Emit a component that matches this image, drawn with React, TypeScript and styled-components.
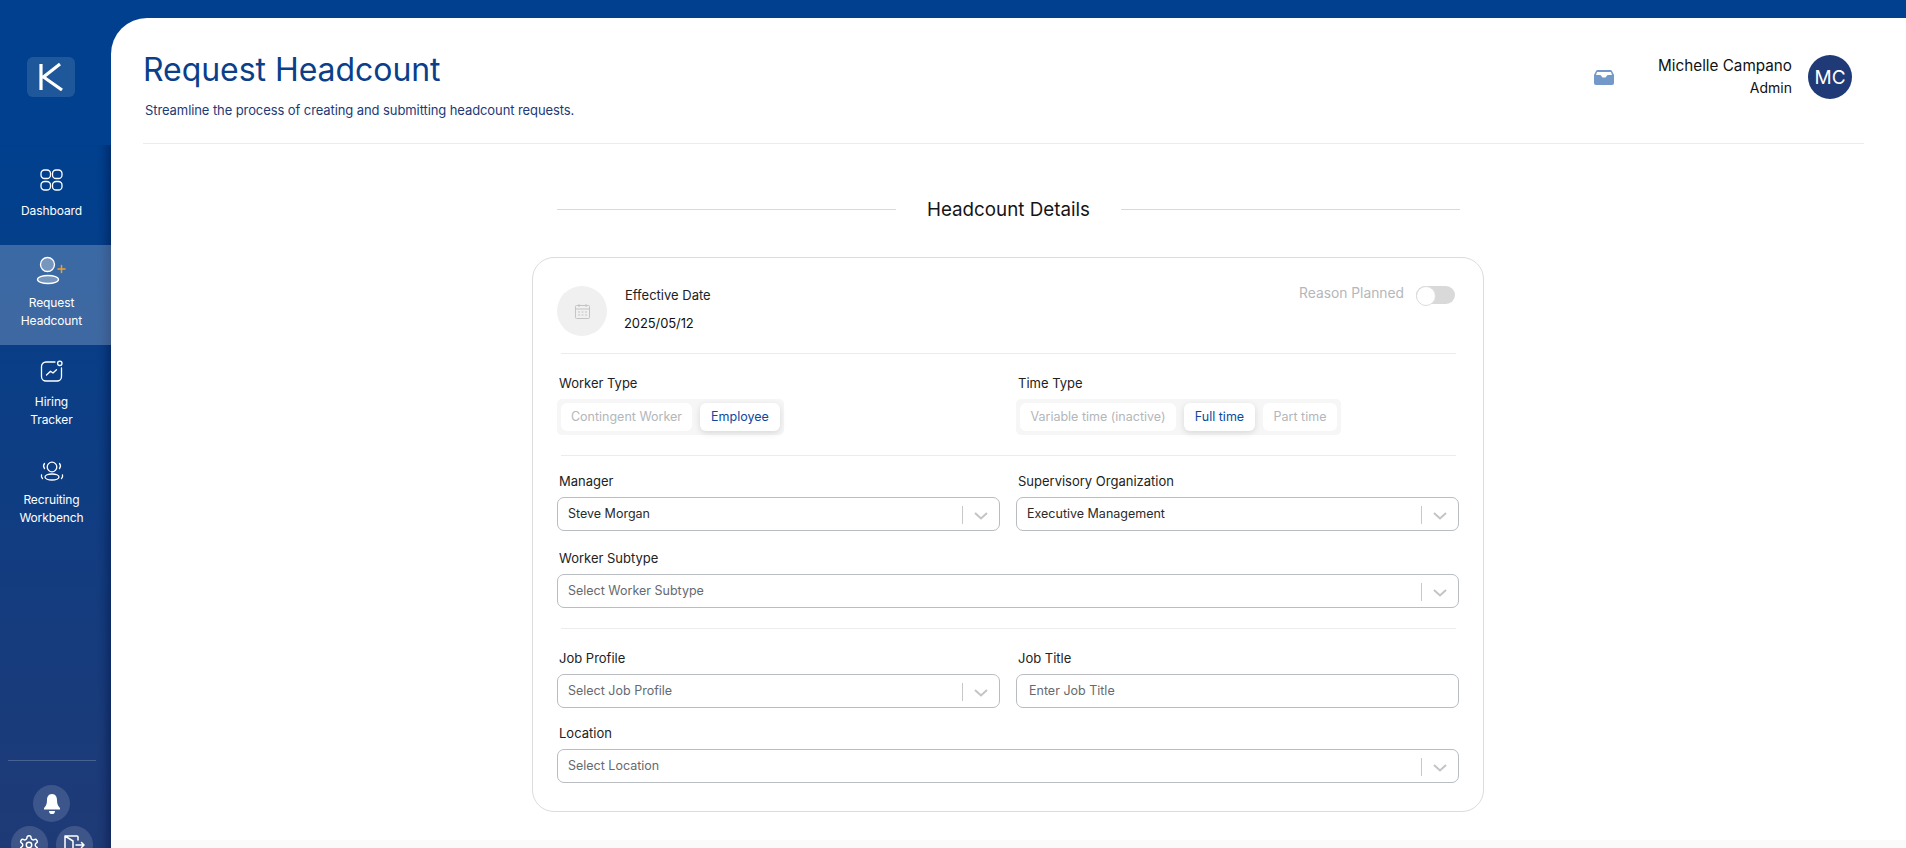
import React from "react";
import styled, { createGlobalStyle } from "styled-components";

const Global = createGlobalStyle`
  html, body { margin: 0; padding: 0; height: 100%; overflow: hidden; background: #fff; }
  body { font-family: "Inter", "Liberation Sans", sans-serif; -webkit-font-smoothing: antialiased; }
  * { box-sizing: border-box; }
`;

const Shell = styled.div`
  display: flex;
  width: 1906px;
  height: 848px;
  overflow: hidden;
  background: #00408e;
`;
const Sidebar = styled.aside`
  width: 111px;
  flex: none;
  display: flex;
  flex-direction: column;
  color: #fff;
  height: 848px;
`;
const LogoArea = styled.div`
  height: 145px;
  flex: none;
  padding: 57px 0 0 27px;
`;
const Logo = styled.div`
  width: 48px;
  height: 40px;
  border-radius: 6px;
  background: rgba(255, 255, 255, 0.12);
  display: flex;
  align-items: center;
  justify-content: center;
`;
const NavPanel = styled.nav`
  flex: 1;
  display: flex;
  flex-direction: column;
  background: linear-gradient(180deg, #00408e 0%, #1f3a76 100%);
  box-shadow: inset -12px 0 10px -8px rgba(0, 16, 60, 0.45);
`;
const NavItem = styled.a<{ $active?: boolean; $h: number; $pad: number }>`
  height: ${(p) => p.$h}px;
  padding: ${(p) => p.$pad}px 8px 0 0;
  flex: none;
  display: flex;
  flex-direction: column;
  align-items: center;
  font-size: 12px;
  line-height: 18px;
  letter-spacing: -0.1px;
  text-align: center;
  color: #fff;
  background: ${(p) => (p.$active ? "rgba(255,255,255,0.22)" : "transparent")};
`;
const NavIcon = styled.svg<{ $gap: number }>`
  width: 28px;
  height: 28px;
  margin-bottom: ${(p) => p.$gap}px;
  flex: none;
  overflow: visible;
`;
const SideBottom = styled.div`
  margin-top: auto;
  display: flex;
  flex-direction: column;
  align-items: center;
  height: 88px;
  padding-right: 8px;
`;
const SideRule = styled.div`
  width: 88px;
  height: 1px;
  background: rgba(255, 255, 255, 0.2);
  margin-bottom: 24px;
  flex: none;
`;
const RoundBtn = styled.div`
  width: 37px;
  height: 37px;
  border-radius: 50%;
  background: rgba(255, 255, 255, 0.14);
  display: flex;
  align-items: center;
  justify-content: center;
  flex: none;
`;
const RoundRow = styled.div`
  display: flex;
  gap: 8px;
  margin-top: 4px;
  flex: none;
`;

const Main = styled.main`
  flex: 1;
  margin-top: 18px;
  height: 830px;
  background: linear-gradient(180deg, #fff 0%, #fff 99%, #fafafa 99%, #fafafa 100%);
  border-top-left-radius: 36px;
  display: flex;
  flex-direction: column;
  overflow: hidden;
`;
const Header = styled.header`
  height: 126px;
  margin: 0 42px 0 32px;
  flex: none;
  border-bottom: 1px solid #ececec;
  display: flex;
  justify-content: space-between;
  padding-right: 12px;
`;
const TitleBlock = styled.div`
  display: flex;
  flex-direction: column;
`;
const Title = styled.h1`
  margin: 32px 0 0;
  font-size: 32px;
  line-height: 40px;
  font-weight: 400;
  color: #0b3f8a;
  letter-spacing: -0.05px;
`;
const Subtitle = styled.p`
  margin: 12px 0 0 2px;
  font-size: 13px;
  line-height: 16px;
  letter-spacing: -0.09px;
  color: #1c3a78;
`;
const UserArea = styled.div`
  display: flex;
  align-items: flex-start;
  padding-top: 37px;
`;
const Inbox = styled.svg`
  width: 20px;
  height: 15px;
  margin: 15px 0 0;
`;
const UserText = styled.div`
  width: 135px;
  margin: 0 16px 0 43px;
  display: flex;
  flex-direction: column;
  align-items: flex-end;
  color: #111;
`;
const UserName = styled.div`
  font-size: 15.25px;
  line-height: 22px;
  white-space: nowrap;
`;
const UserRole = styled.div`
  font-size: 14px;
  line-height: 21px;
`;
const Avatar = styled.div`
  width: 44px;
  height: 44px;
  border-radius: 50%;
  background: #1f3a76;
  color: #fff;
  font-size: 19px;
  display: flex;
  align-items: center;
  justify-content: center;
`;

const Content = styled.div`
  width: 952px;
  margin-left: 421px;
  flex: none;
`;
const SectionHead = styled.div`
  display: flex;
  align-items: center;
  justify-content: center;
  height: 46px;
  margin: 42px 24px 0 25px;
  gap: 31px;
  font-size: 18.8px;
  color: #151515;
  white-space: nowrap;
  &::before, &::after {
    content: "";
    flex: 1;
    height: 1px;
    background: #d9d9d9;
  }
`;
const Card = styled.section`
  margin-top: 25px;
  height: 555px;
  border: 1px solid #dcdcdc;
  border-radius: 22px;
  padding: 28px 23px 0 24px;
  display: flex;
  flex-direction: column;
`;
const DateRow = styled.div`
  display: flex;
  height: 50px;
  flex: none;
`;
const DateCircle = styled.div`
  width: 50px;
  height: 50px;
  border-radius: 50%;
  background: #f0f0f0;
  display: flex;
  align-items: center;
  justify-content: center;
  margin-right: 18px;
  flex: none;
`;
const DateText = styled.div`
  display: flex;
  flex-direction: column;
`;
const DateLabel = styled.div`
  font-size: 13px;
  line-height: 18px;
  color: #222;
`;
const DateValue = styled.div`
  font-size: 13px;
  line-height: 18px;
  letter-spacing: -0.1px;
  color: #111;
  margin: 10px 0 0 -1px;
`;
const ToggleWrap = styled.div`
  margin-left: auto;
  display: flex;
  gap: 12px;
  font-size: 13.8px;
  line-height: 16px;
  color: #b5b7ba;
  margin-right: 5px;
`;
const ToggleText = styled.span`
  margin-top: -1px;
`;
const Toggle = styled.div`
  width: 39px;
  height: 18px;
  border-radius: 9px;
  background: #d9d9d9;
  position: relative;
  &::after {
    content: "";
    position: absolute;
    left: 0;
    top: 0;
    width: 18px;
    height: 18px;
    border-radius: 50%;
    background: #fff;
    border: 1px solid #dcdcdc;
  }
`;
const Rule = styled.div<{ $top: number; $bottom: number }>`
  height: 1px;
  background: #ececec;
  margin: ${(p) => p.$top}px 4px ${(p) => p.$bottom}px;
  flex: none;
`;
const Row = styled.div<{ $mb?: number }>`
  display: grid;
  grid-template-columns: 443px 443px;
  column-gap: 16px;
  margin-bottom: ${(p) => p.$mb ?? 0}px;
  flex: none;
`;
const Field = styled.div`
  display: flex;
  flex-direction: column;
  align-items: flex-start;
`;
const Label = styled.label`
  font-size: 13px;
  line-height: 18px;
  color: #222;
  margin: 0 0 7px 2px;
`;
const Segment = styled.div`
  display: inline-flex;
  gap: 8px;
  padding: 4px;
  border-radius: 5px;
  background: #f6f6f6;
  height: 36px;
`;
const SegBtn = styled.div<{ $on?: boolean; $w: number }>`
  width: ${(p) => p.$w}px;
  height: 28px;
  padding-bottom: 2px;
  border-radius: 6px;
  background: #fff;
  font-size: 12.5px;
  white-space: nowrap;
  display: flex;
  align-items: center;
  justify-content: center;
  color: ${(p) => (p.$on ? "#0b4a9e" : "#b3b6ba")};
  box-shadow: ${(p) => (p.$on ? "0 2px 6px rgba(0,0,0,0.12)" : "none")};
`;
const Control = styled.div<{ $full?: boolean }>`
  width: ${(p) => (p.$full ? "902px" : "100%")};
  height: 34px;
  border: 1px solid #b9bcc0;
  border-radius: 7px;
  background: #fff;
  display: flex;
  align-items: center;
  font-size: 12.5px;
  color: #2a2a2a;
`;
const ControlText = styled.span<{ $placeholder?: boolean; $pad?: number }>`
  flex: 1;
  padding-left: ${(p) => p.$pad ?? 10}px;
  margin-top: -1px;
  color: ${(p) => (p.$placeholder ? "#666a70" : "#2a2a2a")};
`;
const ControlSep = styled.span`
  width: 1px;
  height: 18px;
  background: #c8c8c8;
  margin-top: 1px;
  flex: none;
`;
const Chevron = styled.svg`
  width: 36px;
  height: 18px;
  flex: none;
  margin-top: 3px;
`;

const Select = ({ text, placeholder, full }: { text: string; placeholder?: boolean; full?: boolean }) => (
  <Control $full={full}>
    <ControlText $placeholder={placeholder}>{text}</ControlText>
    <ControlSep />
    <Chevron viewBox="0 0 36 18" fill="none">
      <path d="M12 6 L18 11.5 L24 6" stroke="#c4c4c4" strokeWidth="2" />
    </Chevron>
  </Control>
);

const ic = { fill: "none", stroke: "#fff", strokeWidth: 1.3, strokeLinecap: "round" as const, strokeLinejoin: "round" as const };

export default function App() {
  return (
    <Shell>
      <Global />
      <Sidebar>
        <LogoArea>
          <Logo>
            <svg width="26" height="28" viewBox="0 0 26 28" fill="none">
              <path d="M3 1 V27 M22 1 L5.5 14 L24 27" stroke="#fff" strokeWidth="3.2" />
            </svg>
          </Logo>
        </LogoArea>
        <NavPanel>
          <NavItem $h={100} $pad={21}>
            <NavIcon $gap={8} viewBox="0 0 28 28" {...ic}>
              <rect x="3" y="4" width="9.5" height="8.5" rx="3.6" />
              <rect x="14.5" y="4" width="9.5" height="8.5" rx="3.6" />
              <rect x="3" y="15.5" width="9.5" height="8.5" rx="3.6" />
              <rect x="14.5" y="15.5" width="9.5" height="8.5" rx="3.6" />
            </NavIcon>
            Dashboard
          </NavItem>
          <NavItem $active $h={100} $pad={11}>
            <NavIcon $gap={10} viewBox="0 0 28 28" {...ic}>
              <circle cx="9.5" cy="8.5" r="7" fill="rgba(255,255,255,0.3)" />
              <ellipse cx="10" cy="23.5" rx="10.5" ry="4" fill="rgba(255,255,255,0.3)" />
              <path d="M20 13 H27 M23.5 9.5 V16.5" stroke="#f0a02c" strokeWidth="1.5" />
            </NavIcon>
            Request
            <br />
            Headcount
          </NavItem>
          <NavItem $h={100} $pad={12}>
            <NavIcon $gap={8} viewBox="0 0 28 28" {...ic}>
              <path d="M17 5 H8 a4.5 4.5 0 0 0 -4.5 4.5 V19.5 a4.5 4.5 0 0 0 4.5 4.5 H19 a4.5 4.5 0 0 0 4.5 -4.5 V11" />
              <circle cx="21.8" cy="6.3" r="2.2" />
              <path d="M8.5 18 L12.5 14.2 L15 16 L18.5 12.8" />
            </NavIcon>
            Hiring
            <br />
            Tracker
          </NavItem>
          <NavItem $h={100} $pad={12}>
            <NavIcon $gap={6} viewBox="0 0 28 28" {...ic}>
              <circle cx="14" cy="10" r="4.8" />
              <ellipse cx="14" cy="20" rx="7" ry="3" />
              <path d="M6.5 6.5 Q4.5 9 6.5 11.5 M21.5 6.5 Q23.5 9 21.5 11.5 M3.5 18 Q3 20 4.5 21.5 M24.5 18 Q25 20 23.5 21.5" />
            </NavIcon>
            Recruiting
            <br />
            Workbench
          </NavItem>
          <SideBottom>
            <SideRule />
            <RoundBtn>
              <svg width="18" height="22" viewBox="0 0 18 22" fill="#fff">
                <path d="M9 1 C5.5 1 4 4 4 7 C4 11 3 13 1 15 V16.5 H17 V15 C15 13 14 11 14 7 C14 4 12.5 1 9 1 Z" />
                <path d="M6 18 H12 C12 20.5 10.5 21 9 21 C7.5 21 6 20.5 6 18 Z" />
              </svg>
            </RoundBtn>
            <RoundRow>
              <RoundBtn>
                <svg width="22" height="22" viewBox="0 0 24 24" {...ic} strokeWidth={1.6}>
                  <path d="M12.22 2h-.44a2 2 0 0 0-2 2v.18a2 2 0 0 1-1 1.73l-.43.25a2 2 0 0 1-2 0l-.15-.08a2 2 0 0 0-2.73.73l-.22.38a2 2 0 0 0 .73 2.73l.15.1a2 2 0 0 1 1 1.72v.51a2 2 0 0 1-1 1.74l-.15.09a2 2 0 0 0-.73 2.73l.22.38a2 2 0 0 0 2.73.73l.15-.08a2 2 0 0 1 2 0l.43.25a2 2 0 0 1 1 1.73V20a2 2 0 0 0 2 2h.44a2 2 0 0 0 2-2v-.18a2 2 0 0 1 1-1.73l.43-.25a2 2 0 0 1 2 0l.15.08a2 2 0 0 0 2.73-.73l.22-.39a2 2 0 0 0-.73-2.73l-.15-.08a2 2 0 0 1-1-1.74v-.5a2 2 0 0 1 1-1.74l.15-.09a2 2 0 0 0 .73-2.73l-.22-.38a2 2 0 0 0-2.73-.73l-.15.08a2 2 0 0 1-2 0l-.43-.25a2 2 0 0 1-1-1.73V4a2 2 0 0 0-2-2z" />
                  <circle cx="12" cy="12" r="3" />
                </svg>
              </RoundBtn>
              <RoundBtn>
                <svg width="22" height="22" viewBox="0 0 22 22" {...ic} strokeWidth={1.5}>
                  <path d="M2 2 H14 Q15 2 15 3 V6 M15 15 V18 Q15 19 14 19 H10 M2 2 V16 L10 21 V7 L2 2" />
                  <path d="M13 11 H21 M18.5 8.5 L21 11 L18.5 13.5" />
                </svg>
              </RoundBtn>
            </RoundRow>
          </SideBottom>
        </NavPanel>
      </Sidebar>
      <Main>
        <Header>
          <TitleBlock>
            <Title>Request Headcount</Title>
            <Subtitle>Streamline the process of creating and submitting headcount requests.</Subtitle>
          </TitleBlock>
          <UserArea>
            <Inbox viewBox="0 0 20 15">
              <path
                fill="#7399c9"
                d="M3.5 0 H16.5 Q17.5 0 18 1 L20 5 V13 Q20 15 18 15 H2 Q0 15 0 13 V5 L2 1 Q2.5 0 3.5 0 Z"
              />
              <path fill="#fff" d="M3 2 H17 L18 5 H13.5 L11.5 7.5 H8.5 L6.5 5 H2 Z" />
            </Inbox>
            <UserText>
              <UserName>Michelle Campano</UserName>
              <UserRole>Admin</UserRole>
            </UserText>
            <Avatar>MC</Avatar>
          </UserArea>
        </Header>
        <Content>
          <SectionHead>Headcount Details</SectionHead>
          <Card>
            <DateRow>
              <DateCircle>
                <svg width="15" height="15" viewBox="0 0 15 15" fill="none" stroke="#c4c4c4">
                  <rect x="0.5" y="1.5" width="14" height="13" rx="1" />
                  <path d="M0.5 5 H14.5 M4 0 V3 M11 0 V3" />
                  <path d="M3 8 H5 M6.5 8 H8.5 M10 8 H12 M3 11 H5 M6.5 11 H8.5 M10 11 H12" />
                </svg>
              </DateCircle>
              <DateText>
                <DateLabel>Effective Date</DateLabel>
                <DateValue>2025/05/12</DateValue>
              </DateText>
              <ToggleWrap>
                <ToggleText>Reason Planned</ToggleText>
                <Toggle />
              </ToggleWrap>
            </DateRow>
            <Rule $top={17} $bottom={20} />
            <Row>
              <Field>
                <Label>Worker Type</Label>
                <Segment>
                  <SegBtn $w={131}>Contingent Worker</SegBtn>
                  <SegBtn $w={80} $on>
                    Employee
                  </SegBtn>
                </Segment>
              </Field>
              <Field>
                <Label>Time Type</Label>
                <Segment>
                  <SegBtn $w={156}>Variable time (inactive)</SegBtn>
                  <SegBtn $w={71} $on>
                    Full time
                  </SegBtn>
                  <SegBtn $w={74}>Part time</SegBtn>
                </Segment>
              </Field>
            </Row>
            <Rule $top={20} $bottom={16} />
            <Row $mb={18}>
              <Field>
                <Label>Manager</Label>
                <Select text="Steve Morgan" />
              </Field>
              <Field>
                <Label>Supervisory Organization</Label>
                <Select text="Executive Management" />
              </Field>
            </Row>
            <Field>
              <Label>Worker Subtype</Label>
              <Select text="Select Worker Subtype" placeholder full />
            </Field>
            <Rule $top={20} $bottom={20} />
            <Row $mb={16}>
              <Field>
                <Label>Job Profile</Label>
                <Select text="Select Job Profile" placeholder />
              </Field>
              <Field>
                <Label>Job Title</Label>
                <Control>
                  <ControlText $placeholder $pad={12}>
                    Enter Job Title
                  </ControlText>
                </Control>
              </Field>
            </Row>
            <Field>
              <Label>Location</Label>
              <Select text="Select Location" placeholder full />
            </Field>
          </Card>
        </Content>
      </Main>
    </Shell>
  );
}
